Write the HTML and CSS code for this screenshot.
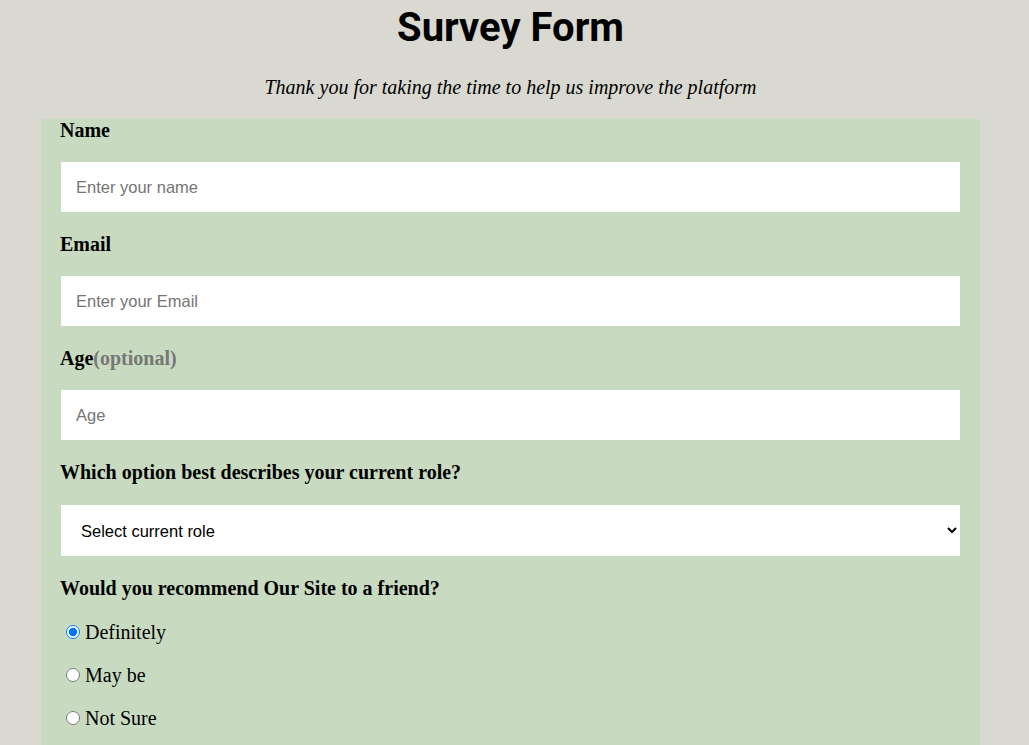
FILE: index.html
```html
<!DOCTYPE html>
<html lang="en">
<head>
<meta charset="utf-8">
<title>Survey Form</title>
<link rel="stylesheet" href="styles.css">
</head>
<body>
<div class="page">
  <h1 class="title">Survey Form</h1>
  <p class="subtitle">Thank you for taking the time to help us improve the platform</p>
  <form class="survey">
    <label class="field-label" for="name">Name</label>
    <input class="field" id="name" type="text" placeholder="Enter your name">
    <label class="field-label" for="email">Email</label>
    <input class="field" id="email" type="email" placeholder="Enter your Email">
    <label class="field-label" for="age">Age<span class="optional">(optional)</span></label>
    <input class="field" id="age" type="number" placeholder="Age">
    <label class="field-label" for="role">Which option best describes your current role?</label>
    <select class="field select" id="role">
      <option>Select current role</option>
      <option>Student</option>
      <option>Full Time Job</option>
      <option>Other</option>
    </select>
    <p class="field-label">Would you recommend Our Site to a friend?</p>
    <div class="radios">
      <label class="radio"><input type="radio" name="rec" checked>Definitely</label>
      <label class="radio"><input type="radio" name="rec">May be</label>
      <label class="radio"><input type="radio" name="rec">Not Sure</label>
    </div>
  </form>
</div>
</body>
</html>
```

FILE: styles.css
```css
html, body {
  margin: 0;
  padding: 0;
  background: #d9d9d1;
}
.page {
  width: 939px;
  margin-left: 41px;
}
.title {
  margin: 0;
  padding-top: 4px;
  text-align: center;
  font-family: Roboto, "Liberation Sans", sans-serif;
  font-weight: 700;
  font-size: 40px;
  line-height: 47px;
  color: #000;
}
.subtitle {
  margin: 25px 0 0;
  text-align: center;
  font-family: "Liberation Serif", serif;
  font-style: italic;
  font-size: 20px;
  line-height: 23px;
  color: #000;
}
.survey {
  margin-top: 20px;
  background: #c8dbc1;
  padding: 0 19px 20px;
  display: flex;
  flex-direction: column;
  align-items: stretch;
}
.field-label {
  display: block;
  margin: 0;
  font-family: "Liberation Serif", serif;
  font-weight: 700;
  font-size: 20px;
  line-height: 23px;
  color: #000;
}
.optional {
  color: #777;
}
.field {
  box-sizing: border-box;
  margin: 20px 0 21px 1px;
  height: 50px;
  width: 899px;
  border: none;
  background: #fff;
  padding: 0 15px;
  font-family: "Liberation Sans", Arial, sans-serif;
  font-size: 16.5px;
  color: #000;
  outline: none;
}
.field::placeholder {
  color: #757575;
}
.select {
  margin-top: 21px;
  height: 51px;
  padding-left: 16px;
  padding-right: 12px;
}
.radios {
  display: flex;
  flex-direction: column;
  padding-top: 22px;
}
.radio {
  display: flex;
  align-items: center;
  height: 20px;
  margin-bottom: 23px;
  font-family: "Liberation Serif", serif;
  font-size: 20px;
  color: #000;
}
.radio input {
  width: 14px;
  height: 14px;
  margin: 0 5px 0 6px;
}
```
